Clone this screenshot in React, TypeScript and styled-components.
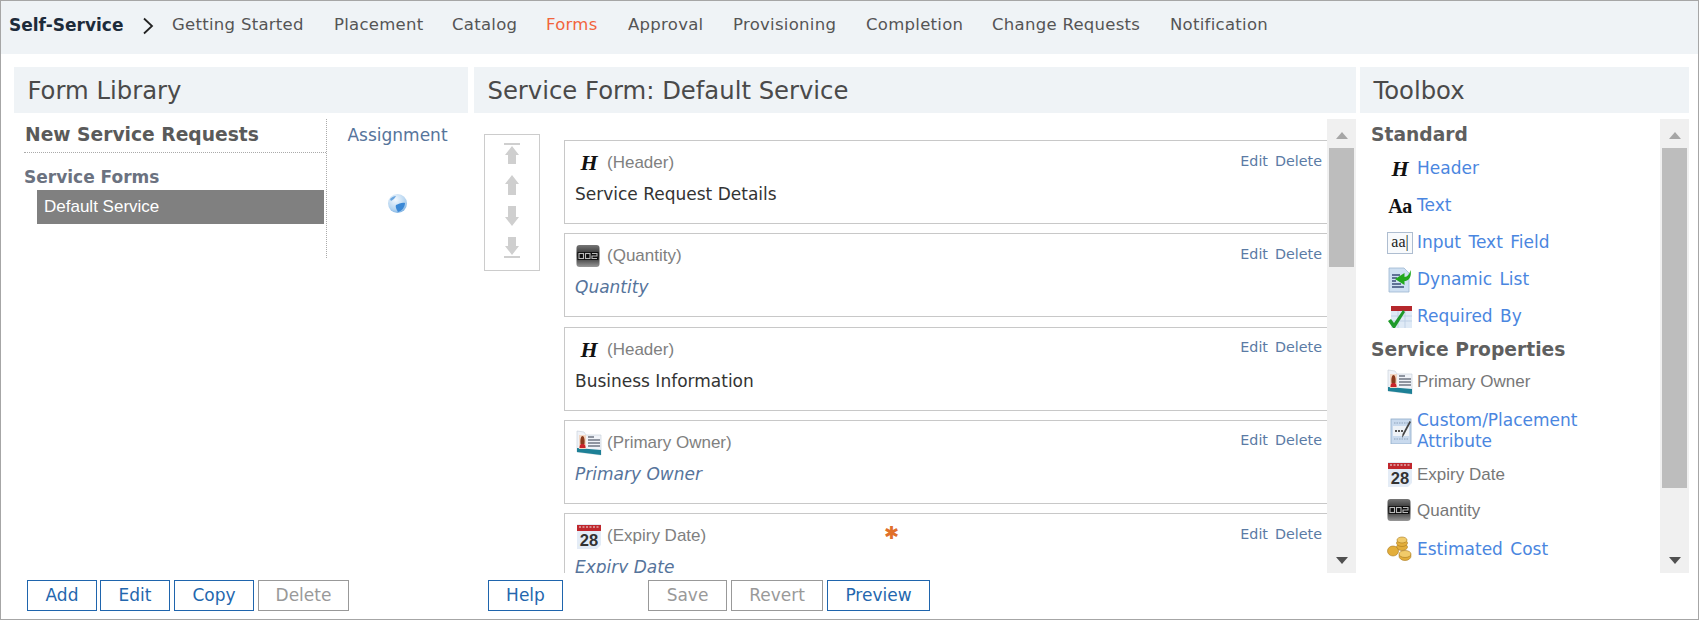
import React from "react";
import styled, { createGlobalStyle } from "styled-components";

const Global = createGlobalStyle`
  html, body { margin: 0; padding: 0; background: #fff; }
  * { box-sizing: border-box; }
`;

const VERD = `"DejaVu Sans", Verdana, sans-serif`;
const ARIAL = `"Liberation Sans", Arial, sans-serif`;
const SERIF = `"Liberation Serif", "Times New Roman", serif`;

const Page = styled.div`
  width: 1699px; height: 620px; border: 1px solid #a6a6a6;
  overflow: hidden; font-family: ${VERD}; background: #fff;
`;
const Nav = styled.nav`
  height: 53px; background: #eff3f6; display: flex; align-items: flex-start; padding-top: 14px; padding-left: 8px;
`;
const Brand = styled.span`
  font: bold 17px/20px ${VERD}; color: #1d2b3a; width: 134px; flex: none;
`;
const Chevron = styled.svg`
  width: 12px; height: 18px; flex: none; margin: 2px 18px 0 -1px;
`;
const NavItem = styled.span<{ $active?: boolean; $w: number }>`
  font: 16.5px/20px ${VERD}; letter-spacing: 0.28px; color: ${(p) => (p.$active ? "#f2643c" : "#555")};
  width: ${(p) => p.$w}px; flex: none; white-space: nowrap;
`;
const Columns = styled.div`
  display: grid; grid-template-columns: 454px 888px 333px; padding: 13px 0 0 13px;
`;
const Column = styled.section<{ $ml?: number }>`
  margin-left: ${(p) => p.$ml ?? 0}px; min-width: 0;
`;
const Head = styled.h2`
  margin: 0; height: 46px; background: #eff3f6; font: 400 24.3px/47px ${VERD}; color: #4a4a4a; padding-left: 13.5px;
`;
const Body = styled.div`
  height: 454px; margin-top: 6px; display: flex; overflow: hidden;
`;
const Footer = styled.div`
  height: 31px; margin-top: 7px; display: flex;
`;
const Btn = styled.button<{ $w: number; $off?: boolean; $ml?: number }>`
  width: ${(p) => p.$w}px; height: 31px; margin-left: ${(p) => p.$ml ?? 0}px; padding: 0;
  background: #fff; border: 1px solid ${(p) => (p.$off ? "#999" : "#1f65ad")};
  color: ${(p) => (p.$off ? "#999" : "#2467ae")}; font: 17px/1 ${VERD};
`;
const LibTree = styled.div`
  width: 313px; height: 139px; border-right: 1px dotted #aaa; padding-left: 10px; flex: none;
`;
const LibTitle = styled.div`
  font: bold 18.7px/32px ${VERD}; color: #5a5a5a; height: 34px; border-bottom: 1px dotted #aaa; white-space: nowrap; padding-left: 1px;
`;
const LibGroup = styled.div`
  font: bold 17px/20px ${VERD}; color: #6b7280; margin-top: 14px;
`;
const LibItem = styled.div`
  margin: 3px 2px 0 13px; height: 34px; background: #808080; color: #fff; font: 17px/34px ${ARIAL}; padding-left: 7px;
`;
const Assign = styled.div`
  flex: 1; display: flex; flex-direction: column; align-items: center;
`;
const AssignTitle = styled.div`
  font: 17px/20px ${VERD}; color: #56749b; margin-top: 6px;
`;
const Globe = styled.svg`
  width: 21px; height: 21px; margin-top: 48px;
`;
const MoveBox = styled.div`
  width: 56px; height: 137px; margin: 15px 0 0 10px; border: 1px solid #ccc; flex: none;
  display: flex; flex-direction: column; align-items: center; padding-top: 8px; gap: 9px;
`;
const CardList = styled.div`
  width: 763px; margin-left: 24px; margin-top: 21px; display: flex; flex-direction: column; gap: 9.3px; flex: none;
`;
const Card = styled.article`
  height: 84px; flex: none; border: 1px solid #c8c8c8; border-right: 0; padding: 0 5px 0 10px; background: #fff;
`;
const CardTop = styled.div`
  display: flex; align-items: center; height: 44px;
`;
const CardIcon = styled.span`
  width: 32px; flex: none; display: flex; align-items: center; padding-left: 1px;
`;
const CardType = styled.span<{ $star?: boolean }>`
  font: 17px/20px ${ARIAL}; color: #808080; min-width: ${(p) => (p.$star ? "277px" : "0")};
`;
const Star = styled.span`
  font: bold 18px/20px ${VERD}; color: #e0702a; margin-top: -6px;
`;
const Actions = styled.span`
  margin-left: auto; font: 14.3px/20px ${VERD}; color: #5b7ba5; margin-top: -5px; word-spacing: 2.5px;
`;
const CardTitle = styled.div`
  font: 17px/20px ${VERD}; color: #333; margin-top: -1px;
`;
const CardField = styled(CardTitle)`
  font-style: italic; color: #56749b;
`;
const Track = styled.div`
  width: 29px; flex: none; background: #f0f0f0; height: 454px; display: flex; flex-direction: column; align-items: center;
`;
const TrackBtn = styled.div<{ $down?: boolean }>`
  width: 29px; height: 29px; flex: none; display: flex; align-items: center; justify-content: center;
  margin-top: ${(p) => (p.$down ? "auto" : "0")};
  &::after {
    content: ""; border-left: 6.5px solid transparent; border-right: 6.5px solid transparent;
    ${(p) => (p.$down ? "border-top: 7px solid #505050; margin-top: 4px;" : "border-bottom: 7px solid #a6a6a6; margin-top: 4px;")}
  }
`;
const Thumb = styled.div<{ $h: number }>`
  width: 25px; height: ${(p) => p.$h}px; background: #bdbdbd; flex: none;
`;
const Box = styled.div`
  flex: 1; padding-left: 11px; min-width: 0;
`;
const BoxHead = styled.div<{ $h: number }>`
  font: bold 18.7px/30px ${VERD}; color: #5f5f5f; height: ${(p) => p.$h}px; display: flex; align-items: center;
`;
const Item = styled.div<{ $h: number; $pt?: number }>`
  height: ${(p) => p.$h}px; display: flex; align-items: center; padding-left: 16px; padding-top: ${(p) => p.$pt ?? 0}px;
`;
const ItemIcon = styled.span`
  width: 30px; flex: none; display: flex; align-items: center;
`;
const ItemLink = styled.span`
  font: 17px/21px ${VERD}; color: #4a86e0; width: 190px; word-spacing: 2px;
`;
const ItemPlain = styled.span`
  font: 17px/21px ${ARIAL}; color: #777;
`;
const HGlyph = styled.span`
  width: 26px; text-align: center; font: italic bold 22px/24px ${SERIF}; color: #111;
`;
const AaGlyph = styled.span`
  width: 26px; text-align: center; font: bold 20px/22px ${SERIF}; color: #111; letter-spacing: -0.5px;
`;
const FieldGlyph = styled.span`
  width: 26px; height: 22px; border: 1px solid #aebdd0; background: #f8fafc; text-align: center; font: 16px/18px ${SERIF}; color: #222;
`;

type IconKind = "h" | "counter" | "owner" | "cal";

const Counter = () => (
  <svg width="24" height="24" viewBox="0 0 24 24">
    <defs><linearGradient id="cg" x1="0" y1="0" x2="0" y2="1"><stop offset="0" stopColor="#777" /><stop offset="0.45" stopColor="#2c2c2c" /><stop offset="0.7" stopColor="#555" /><stop offset="1" stopColor="#999" /></linearGradient></defs>
    <rect x="0.5" y="1" width="23" height="22" rx="3" fill="url(#cg)" />
    <rect x="1.500" y="8" width="21" height="8" fill="#101010" />
    <rect x="3" y="9.500" width="4.500" height="5" fill="none" stroke="#bbb" strokeWidth="1.1" />
    <rect x="9.500" y="9.500" width="4.500" height="5" fill="none" stroke="#bbb" strokeWidth="1.1" />
    <path d="M16 9.500h5v2.500h-5v2.500h5" fill="none" stroke="#bbb" strokeWidth="1.1" />
  </svg>
);
const Owner = () => (
  <svg width="26" height="26" viewBox="0 0 26 26">
    <path d="M1 1l7 1 2 3h15v20L1 22z" fill="#f0f3f8" stroke="#c5ccd6" strokeWidth="0.6" />
    <path d="M1 18l24 2v5L1 22z" fill="#1d8096" />
    <rect x="3" y="5" width="7" height="14" fill="#f2d6c2" />
    <path d="M3.500 18c0-3 1-4.500 3-4.500s3 1.500 3 4.500z" fill="#c8242a" />
    <path d="M4.500 14c-.5-5 .5-8 2-8s2.500 3 2 8z" fill="#8a3a1c" />
    <path d="M12 7h6M12 10h12M12 13h12M12 16h12" stroke="#6f7782" strokeWidth="1.3" />
  </svg>
);
const Calendar = () => (
  <svg width="26" height="26" viewBox="0 0 26 26">
    <rect x="1" y="1" width="24" height="25" fill="#e4ecf6" />
    <rect x="1" y="2" width="24" height="6" fill="#c0272d" />
    <path d="M3 4h20" stroke="#eee" strokeWidth="1" strokeDasharray="2 1.5" />
    <text x="13" y="22.500" textAnchor="middle" fontFamily={ARIAL} fontWeight="bold" fontSize="16.500" fill="#333">28</text>
    <path d="M25 26h-4l4-4z" fill="#fff" />
  </svg>
);
const DynamicList = () => (
  <svg width="24" height="26" viewBox="0 0 24 26">
    <path d="M2 1h15l5 5v19H2z" fill="#cfe0f2" stroke="#9db6d0" strokeWidth="0.8" />
    <path d="M5 8h8M5 11h5M5 14h4M5 17h9M5 20h12" stroke="#3b4e78" strokeWidth="1.4" />
    <path d="M23.500 3c1.500 7-2 11-6 11v4L8 12l9.500-6v4c3 0 5-3 6-7z" fill="#22a81c" />
  </svg>
);
const Required = () => (
  <svg width="26" height="26" viewBox="0 0 26 26">
    <rect x="4" y="2" width="21" height="22" fill="#dfeaf6" />
    <rect x="4" y="2" width="21" height="5" fill="#b5272c" />
    <path d="M4 12h21M4 17h21M11 7v17M18 7v17" stroke="#b9cde3" strokeWidth="0.8" />
    <path d="M1 17l3-2 3 4 9-13 2 2-10 16H6z" fill="#1e9a2a" />
  </svg>
);
const CustomAttr = () => (
  <svg width="26" height="26" viewBox="0 0 26 26">
    <rect x="4" y="1" width="20" height="25" fill="#c9daee" stroke="#8fabc9" strokeWidth="0.8" />
    <path d="M7 5h14M7 21h14" stroke="#8fa3bb" strokeWidth="1" strokeDasharray="1.500 1" />
    <rect x="6" y="8" width="16" height="10" fill="#eef2f7" />
    <path d="M8 13h8" stroke="#555" strokeWidth="2" strokeDasharray="2 1" />
    <path d="M24 4l-7 13-2 3 .5-4 7-13z" fill="#444" />
  </svg>
);
const Coins = () => (
  <svg width="26" height="26" viewBox="0 0 26 26">
    <g fill="#e3ae3b" stroke="#a9781c" strokeWidth="0.6">
      <ellipse cx="15" cy="11" rx="5.500" ry="3.500" />
      <ellipse cx="15" cy="7" rx="5.500" ry="3.500" />
      <ellipse cx="15" cy="4" rx="5" ry="3" fill="#f1cb6a" />
      <ellipse cx="6" cy="15" rx="5.500" ry="5" />
      <ellipse cx="18" cy="20" rx="6" ry="4.500" />
      <ellipse cx="18" cy="18" rx="6" ry="3.500" fill="#f1cb6a" />
    </g>
  </svg>
);

const MoveArrow = ({ dir, bar }: { dir: "up" | "down"; bar?: boolean }) => (
  <svg width="18" height="22" viewBox="0 0 18 22">
    <g transform={dir === "down" ? "rotate(180 9 11)" : undefined} fill="#cfcfcf">
      {bar && <rect x="1" y="0" width="16" height="2" />}
      <path d={bar ? "M9 3l7 9h-3v9H5v-9H2z" : "M9 1l7 9h-3v11H5V10H2z"} />
    </g>
  </svg>
);

const cardIcon = (k: IconKind) => {
  if (k === "h") return <HGlyph>H</HGlyph>;
  if (k === "counter") return <Counter />;
  if (k === "owner") return <Owner />;
  return <Calendar />;
};

const cards: { icon: IconKind; type: string; title: string; field?: boolean; star?: boolean }[] = [
  { icon: "h", type: "(Header)", title: "Service Request Details" },
  { icon: "counter", type: "(Quantity)", title: "Quantity", field: true },
  { icon: "h", type: "(Header)", title: "Business Information" },
  { icon: "owner", type: "(Primary Owner)", title: "Primary Owner", field: true },
  { icon: "cal", type: "(Expiry Date)", title: "Expiry Date", field: true, star: true },
];

const Scroll = ({ thumb }: { thumb: number }) => (
  <Track>
    <TrackBtn />
    <Thumb $h={thumb} />
    <TrackBtn $down />
  </Track>
);

const navItems: [string, number][] = [
  ["Getting Started", 162],
  ["Placement", 118],
  ["Catalog", 94],
  ["Forms", 82],
  ["Approval", 105],
  ["Provisioning", 133],
  ["Completion", 126],
  ["Change Requests", 178],
  ["Notification", 100],
];

export default function App() {
  return (
    <Page>
      <Global />
      <Nav>
        <Brand>Self-Service</Brand>
        <Chevron viewBox="0 0 12 18"><path d="M2 1.500l8 7.500-8 7.500" fill="none" stroke="#222" strokeWidth="1.8" /></Chevron>
        {navItems.map(([n, w]) => (
          <NavItem key={n} $w={w} $active={n === "Forms"}>{n}</NavItem>
        ))}
      </Nav>
      <Columns>
        <Column>
          <Head>Form Library</Head>
          <Body>
            <LibTree>
              <LibTitle>New Service Requests</LibTitle>
              <LibGroup>Service Forms</LibGroup>
              <LibItem>Default Service</LibItem>
            </LibTree>
            <Assign>
              <AssignTitle>Assignment</AssignTitle>
              <Globe viewBox="0 0 21 21">
                <defs><radialGradient id="gl" cx="0.4" cy="0.3" r="0.8"><stop offset="0" stopColor="#f4f9fe" /><stop offset="0.65" stopColor="#b4d4f0" /><stop offset="1" stopColor="#6aa5de" /></radialGradient></defs>
                <circle cx="10.500" cy="10.500" r="9.500" fill="url(#gl)" />
                <path d="M9 12c3-1 6-3 9-2 0 4-3 8-7 9-1-2-3-5-2-7z" fill="#3a88d6" />
                <path d="M3 6c2-2 4-3 6-3-1 2-3 4-5 5z" fill="#6aa6e0" />
              </Globe>
            </Assign>
          </Body>
          <Footer>
            <Btn $w={70} $ml={13}>Add</Btn>
            <Btn $w={70} $ml={3}>Edit</Btn>
            <Btn $w={80} $ml={4}>Copy</Btn>
            <Btn $w={91} $ml={4} $off>Delete</Btn>
          </Footer>
        </Column>
        <Column $ml={6}>
          <Head>Service Form: Default Service</Head>
          <Body>
            <MoveBox>
              <MoveArrow dir="up" bar />
              <MoveArrow dir="up" />
              <MoveArrow dir="down" />
              <MoveArrow dir="down" bar />
            </MoveBox>
            <CardList>
              {cards.map((c, i) => (
                <Card key={i}>
                  <CardTop>
                    <CardIcon>{cardIcon(c.icon)}</CardIcon>
                    <CardType $star={c.star}>{c.type}</CardType>
                    {c.star && <Star>✱</Star>}
                    <Actions>Edit Delete</Actions>
                  </CardTop>
                  {c.field ? <CardField>{c.title}</CardField> : <CardTitle>{c.title}</CardTitle>}
                </Card>
              ))}
            </CardList>
            <Scroll thumb={119} />
          </Body>
          <Footer>
            <Btn $w={75} $ml={14}>Help</Btn>
            <Btn $w={79} $ml={85} $off>Save</Btn>
            <Btn $w={92} $ml={4} $off>Revert</Btn>
            <Btn $w={103} $ml={4}>Preview</Btn>
          </Footer>
        </Column>
        <Column $ml={4}>
          <Head>Toolbox</Head>
          <Body>
            <Box>
              <BoxHead $h={31}>Standard</BoxHead>
              <Item $h={37}><ItemIcon><HGlyph>H</HGlyph></ItemIcon><ItemLink>Header</ItemLink></Item>
              <Item $h={37}><ItemIcon><AaGlyph>Aa</AaGlyph></ItemIcon><ItemLink>Text</ItemLink></Item>
              <Item $h={37}><ItemIcon><FieldGlyph>aa|</FieldGlyph></ItemIcon><ItemLink>Input Text Field</ItemLink></Item>
              <Item $h={37}><ItemIcon><DynamicList /></ItemIcon><ItemLink>Dynamic List</ItemLink></Item>
              <Item $h={37}><ItemIcon><Required /></ItemIcon><ItemLink>Required By</ItemLink></Item>
              <BoxHead $h={29}>Service Properties</BoxHead>
              <Item $h={35}><ItemIcon><Owner /></ItemIcon><ItemPlain>Primary Owner</ItemPlain></Item>
              <Item $h={60} $pt={3}><ItemIcon><CustomAttr /></ItemIcon><ItemLink>Custom/Placement Attribute</ItemLink></Item>
              <Item $h={30}><ItemIcon><Calendar /></ItemIcon><ItemPlain>Expiry Date</ItemPlain></Item>
              <Item $h={42}><ItemIcon><Counter /></ItemIcon><ItemPlain>Quantity</ItemPlain></Item>
              <Item $h={36}><ItemIcon><Coins /></ItemIcon><ItemLink>Estimated Cost</ItemLink></Item>
            </Box>
            <Scroll thumb={340} />
          </Body>
        </Column>
      </Columns>
    </Page>
  );
}
